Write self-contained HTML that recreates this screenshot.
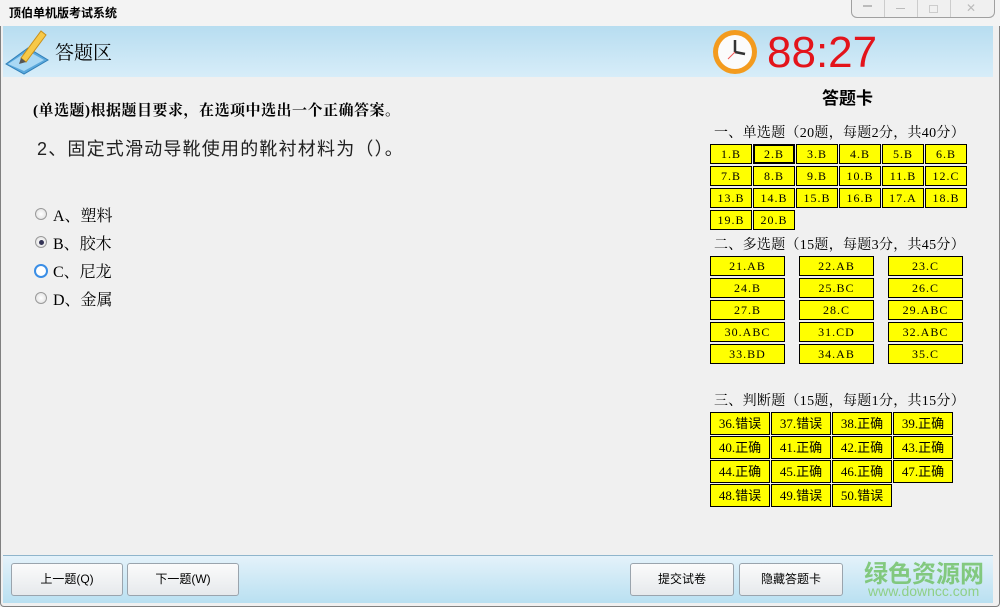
<!DOCTYPE html>
<html><head><meta charset="utf-8"><style>
*{margin:0;padding:0;box-sizing:border-box}
body{width:1000px;height:607px;overflow:hidden;background:#f0f0f0;position:relative;font-family:"Liberation Sans","Noto Sans CJK SC",sans-serif;color:#000}
.a{position:absolute}
.c{position:absolute;background:#ffff00;border:1px solid #000;font-family:"Liberation Serif","Noto Sans CJK SC",serif;font-size:12px;letter-spacing:1px;text-align:center;line-height:18px;height:20px;color:#000}
.btn{position:absolute;top:563px;height:33px;border:1px solid #9aa4ad;border-radius:3px;background:linear-gradient(#fbfbfb,#e6e9ec);font-size:12px;text-align:center;line-height:31px}
.lbl{position:absolute;left:714px;font-size:14px;letter-spacing:0.3px;font-family:"Liberation Serif","Noto Serif CJK SC",serif}
.opt{position:absolute;left:53px;font-size:16px;font-family:"Liberation Serif","Noto Serif CJK SC",serif}
.rd{position:absolute;left:35px;width:12px;height:12px;border-radius:50%;border:1px solid #9a9a9a;background:radial-gradient(#fff,#ddd)}
</style></head><body>
<div class="a" style="left:0;top:0;width:1000px;height:607px;border:1px solid #808080;border-top:none;border-radius:0 0 4px 4px"></div>
<div class="a" style="left:0;top:0;width:1000px;height:26px;background:#f3f3f3"></div>
<div class="a" style="left:9px;top:4px;font-size:12px;font-weight:bold">顶伯单机版考试系统</div>
<div class="a" style="left:851px;top:0;width:144px;height:18px;border:1px solid #a0a0a0;border-top:none;border-radius:0 0 6px 6px;background:#f0f0f0"></div>
<div class="a" style="left:884px;top:0;width:1px;height:17px;background:#ccc"></div>
<div class="a" style="left:917px;top:0;width:1px;height:17px;background:#ccc"></div>
<div class="a" style="left:950px;top:0;width:1px;height:17px;background:#ccc"></div>
<div class="a" style="left:863px;top:5px;width:9px;height:4px;border-top:2px solid #bbb"></div>
<div class="a" style="left:896px;top:8px;width:9px;height:1px;background:#bbb"></div>
<div class="a" style="left:929px;top:5px;width:9px;height:8px;border:1px solid #ccc"></div>
<div class="a" style="left:966px;top:1px;font-size:12px;color:#bbb">✕</div>
<div class="a" style="left:3px;top:26px;width:990px;height:51px;background:linear-gradient(#b7ddf0,#d7edf9)"></div>
<svg class="a" style="left:4px;top:26px" width="48" height="50" viewBox="0 0 48 50">
<polygon points="2,38 24,22 44,34 20,48" fill="#5aa8dc" stroke="#2f7fb8"/>
<polygon points="4,38 24,25 40,34 20,45" fill="#a9d8f4"/>
<polygon points="17,32 37,5 42,9 22,36" fill="#f7c948" stroke="#c8901a"/>
<polygon points="17,32 22,36 15,38" fill="#555"/>
</svg>
<div class="a" style="left:55px;top:38px;font-size:19px;font-family:'Liberation Serif','Noto Serif CJK SC',serif">答题区</div>
<svg class="a" style="left:710px;top:28px" width="50" height="48" viewBox="0 0 50 48">
<circle cx="25" cy="24" r="22" fill="#f39b1e"/><circle cx="25" cy="24" r="17" fill="#fbfbfb"/>
<line x1="25" y1="24" x2="25" y2="12" stroke="#333" stroke-width="2.5"/><line x1="25" y1="24" x2="35" y2="26" stroke="#333" stroke-width="2.5"/><line x1="25" y1="24" x2="18" y2="31" stroke="#e55" stroke-width="1"/>
</svg>
<div class="a" style="left:767px;top:27px;font-size:44px;color:#e3141b;line-height:52px">88:27</div>
<div class="a" style="left:33px;top:99px;font-size:15px;font-weight:bold;letter-spacing:0.5px;font-family:'Liberation Serif','Noto Serif CJK SC',serif">(单选题)根据题目要求，在选项中选出一个正确答案。</div>
<div class="a" style="left:37px;top:135px;font-size:18px;letter-spacing:1.2px;color:#222">2、固定式滑动导靴使用的靴衬材料为（）。</div>
<div class="rd" style="top:208px"></div><div class="opt" style="top:203px">A、塑料</div>
<div class="rd" style="top:236px"></div><div class="a" style="left:39px;top:240px;width:5px;height:5px;border-radius:50%;background:#335"></div><div class="opt" style="top:231px">B、胶木</div>
<div class="rd" style="top:264px;border:2px solid #3a8ee6;background:#fff;left:34px;width:14px;height:14px"></div><div class="opt" style="top:259px">C、尼龙</div>
<div class="rd" style="top:292px"></div><div class="opt" style="top:287px">D、金属</div>
<div class="a" style="left:822px;top:84px;font-size:17px;font-weight:bold">答题卡</div>
<div class="lbl" style="top:122px">一、单选题（20题，每题2分，共40分）</div>
<div class="lbl" style="top:234px">二、多选题（15题，每题3分，共45分）</div>
<div class="lbl" style="top:390px">三、判断题（15题，每题1分，共15分）</div>
<div id="g"></div>
<div class="a" style="left:3px;top:555px;width:990px;height:48px;background:linear-gradient(#e4f2fa,#b9e0f1);border-top:1px solid #8fb5cc"></div>
<div class="btn" style="left:11px;width:112px">上一题(Q)</div>
<div class="btn" style="left:127px;width:112px">下一题(W)</div>
<div class="btn" style="left:630px;width:104px">提交试卷</div>
<div class="btn" style="left:739px;width:104px">隐藏答题卡</div>
<div class="a" style="left:864px;top:554px;font-size:24px;color:#74c36a;font-weight:bold;opacity:.85">绿色资源网</div>
<div class="a" style="left:868px;top:583px;font-size:14px;color:#8fcf87">www.downcc.com</div>
<script>
var g=document.getElementById('g'),h='';
var s=['B','B','B','B','B','B','B','B','B','B','B','C','B','B','B','B','A','B','B','B'];
for(var i=0;i<20;i++){var x=710+(i%6)*43,y=144+Math.floor(i/6)*22;h+='<div class="c" style="left:'+x+'px;top:'+y+'px;width:42px;'+(i==1?'border:2px solid #000;line-height:16px':'')+'">'+(i+1)+'.'+s[i]+'</div>';}
var m=['AB','AB','C','B','BC','C','B','C','ABC','ABC','CD','ABC','BD','AB','C'];
for(i=0;i<15;i++){x=[710,799,888][i%3];y=256+Math.floor(i/3)*22;h+='<div class="c" style="left:'+x+'px;top:'+y+'px;width:75px">'+(21+i)+'.'+m[i]+'</div>';}
var j=['错误','错误','正确','正确','正确','正确','正确','正确','正确','正确','正确','正确','错误','错误','错误'];
for(i=0;i<15;i++){x=710+(i%4)*61;y=412+Math.floor(i/4)*24;h+='<div class="c" style="left:'+x+'px;top:'+y+'px;width:60px;height:23px;line-height:21px;font-size:13px;letter-spacing:0">'+(36+i)+'.'+j[i]+'</div>';}
g.innerHTML=h;
</script>
</body></html>
